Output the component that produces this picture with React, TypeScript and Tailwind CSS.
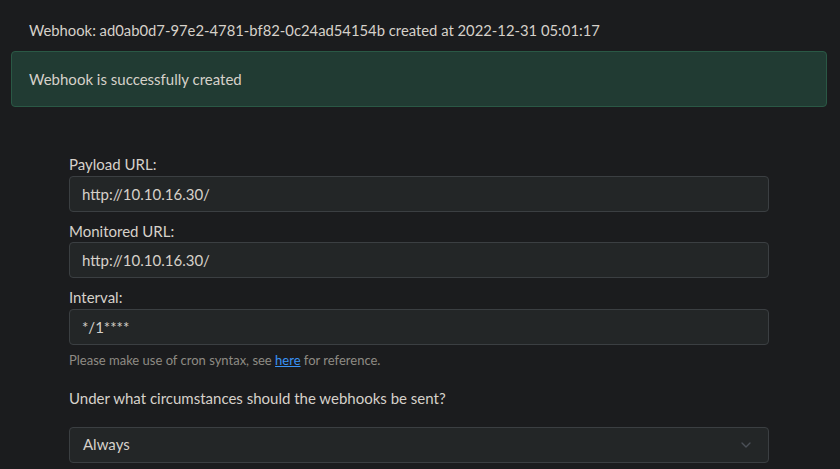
import { ChevronDown } from 'lucide-react';

const Field = ({ label, value }: { label: string; value: string }) => (
  <div className="mb-2">
    <label className="block leading-[22.5px]">{label}</label>
    <div className="h-[36px] w-full rounded-[4px] border border-[#3b3f42] bg-[#232627] px-3 leading-[34px]">
      {value}
    </div>
  </div>
);

export default function App() {
  return (
    <div
      className="min-h-[469px] w-[840px] bg-[#1b1c1e] text-[15px] leading-[22.5px] text-[#d6d1ca]"
      style={{ fontFamily: 'Lato, "Noto Sans", sans-serif' }}
    >
      <div className="pt-[19px] pl-[29px] text-[14.8px]">
        Webhook: ad0ab0d7-97e2-4781-bf82-0c24ad54154b created at 2022-12-31 05:01:17
      </div>

      <div className="mt-[9px] ml-[11px] mr-[13px] rounded-[4px] border border-[#2a5845] bg-[#213b33] px-[17px] py-4">
        Webhook is successfully created
      </div>

      <div className="ml-[69px] mt-[46px] w-[700px]">
        <Field label="Payload URL:" value="http://10.10.16.30/" />
        <Field label="Monitored URL:" value="http://10.10.16.30/" />
        <div>
          <label className="block leading-[22.5px]">Interval:</label>
          <div className="h-[36px] w-full rounded-[4px] border border-[#3b3f42] bg-[#232627] px-3 leading-[34px]">
            */1****
          </div>
          <div className="mt-[6px] text-[13px] leading-[19.5px] text-[#8e8b84]">
            Please make use of cron syntax, see{' '}
            <a href="#" className="text-[#3a93f5] underline">
              here
            </a>{' '}
            for reference.
          </div>
        </div>

        <div className="mt-[17px]">Under what circumstances should the webhooks be sent?</div>

        <div className="mt-[17px] flex h-[36px] w-full items-center justify-between rounded-[4px] border border-[#3b3f42] bg-[#232627] pl-[13px] pr-[14px]">
          <span>Always</span>
          <ChevronDown size={16} strokeWidth={2} className="text-[#4b5057]" />
        </div>
      </div>
    </div>
  );
}
